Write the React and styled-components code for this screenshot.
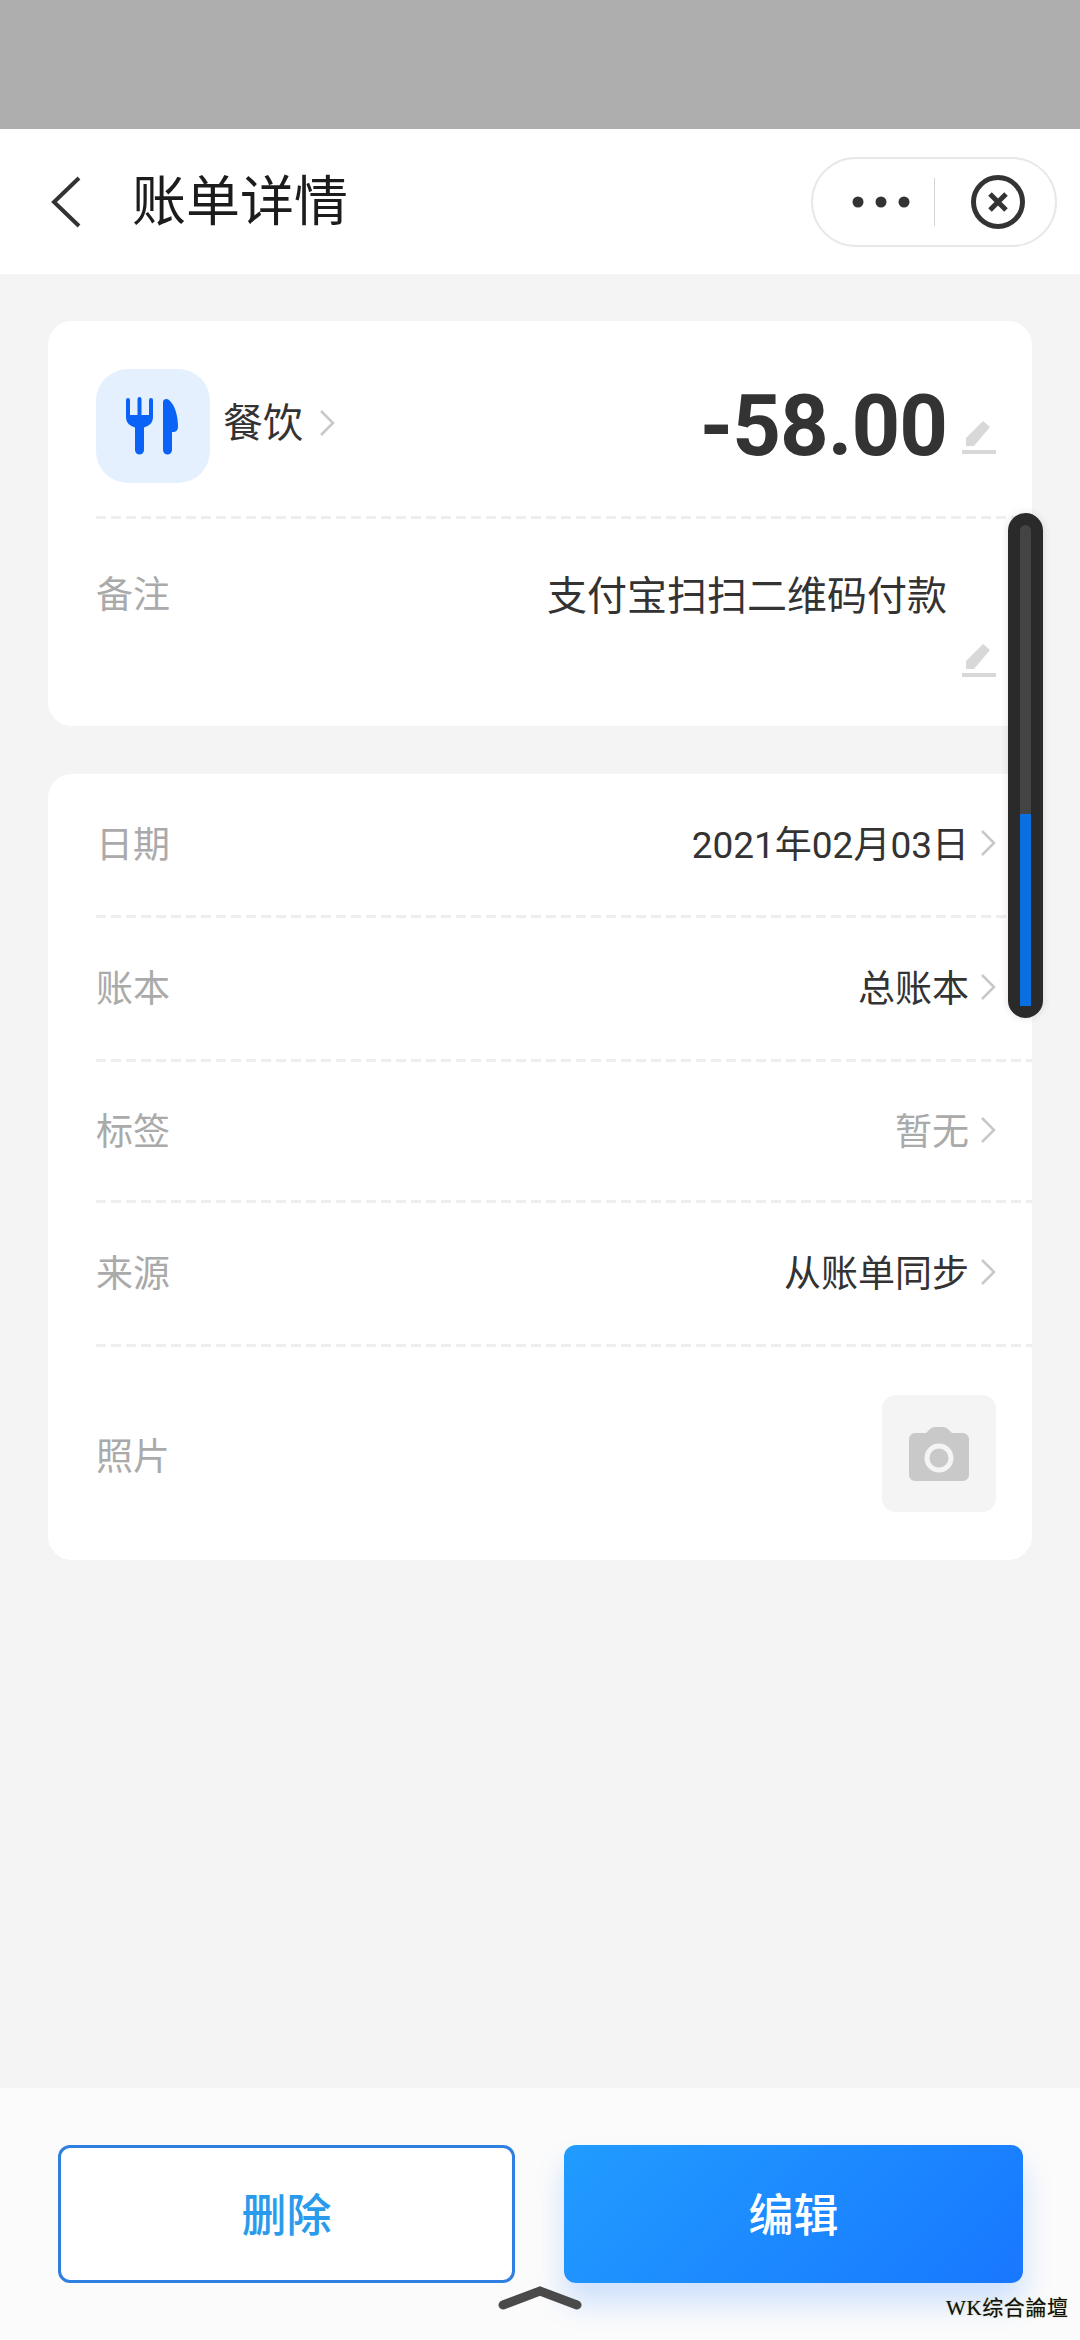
import styled, { createGlobalStyle } from 'styled-components';

const GlobalStyle = createGlobalStyle`
  html, body {
    margin: 0;
    padding: 0;
    background: #f4f4f4;
    font-family: 'Noto Sans CJK SC', 'Noto Sans', sans-serif;
  }
  * { box-sizing: border-box; }
`;

const rows = [
  { label: '日期', value: '2021年02月03日', height: 144 },
  { label: '账本', value: '总账本', height: 144 },
  { label: '标签', value: '暂无', height: 141, muted: true },
  { label: '来源', value: '从账单同步', height: 144 },
];

const scrollPercent = 40;

function Chevron({ className }) {
  return (
    <svg className={className} viewBox="0 0 16 28" fill="none">
      <path d="M2 2l12 12L2 26" stroke="#c8c8c8" strokeWidth="2.5" />
    </svg>
  );
}

function Pencil() {
  return (
    <PencilIcon viewBox="0 0 34 34" fill="#d8d8d8">
      <path d="M21 1l7 6-16 19H4v-8z" />
      <rect x="0" y="30" width="34" height="4" />
    </PencilIcon>
  );
}

function App() {
  return (
    <Page>
      <GlobalStyle />
      <StatusBar />

      <Header>
        <BackIcon viewBox="0 0 32 52" fill="none">
          <path d="M29 2L4 26l25 24" stroke="#333" strokeWidth="4" />
        </BackIcon>
        <Title>账单详情</Title>
        <Capsule>
          <DotsIcon viewBox="0 0 58 14" fill="#333">
            <circle cx="6" cy="7" r="5.5" />
            <circle cx="29" cy="7" r="5.5" />
            <circle cx="52" cy="7" r="5.5" />
          </DotsIcon>
          <CapsuleLine />
          <CloseIcon viewBox="0 0 54 54" fill="none" stroke="#333">
            <circle cx="27" cy="27" r="24.5" strokeWidth="5" />
            <path d="M19 19l16 16M35 19L19 35" strokeWidth="5" />
          </CloseIcon>
        </Capsule>
      </Header>

      <Main>
        <Card>
          <Summary>
            <CategoryBox>
              <svg width="114" height="114" viewBox="0 0 114 114" fill="#0a63f6">
                <path d="M30 31a2 2 0 0 1 4 0V46h7.5V30a2 2 0 0 1 4 0V46H53V31a2 2 0 0 1 4 0V48c0 6-4 9-9 10.5V81a4.5 4.5 0 0 1-9 0V58.5C34 57 30 54 30 48z" />
                <path d="M67 33c0-3 4-4 6-2 6 5 9 16 9 27 0 3-2 5-5 5h-1V81a4.5 4.5 0 0 1-9 0z" />
              </svg>
            </CategoryBox>
            <CategoryName>餐饮</CategoryName>
            <CategoryArrow />
            <Amount>-58.00</Amount>
            <Pencil />
          </Summary>
          <NoteRow>
            <Label>备注</Label>
            <NoteBody>
              <NoteText>支付宝扫扫二维码付款</NoteText>
              <Pencil />
            </NoteBody>
          </NoteRow>
        </Card>

        <DetailCard>
          {rows.map((row) => (
            <Row key={row.label} $height={row.height}>
              <Label>{row.label}</Label>
              <Value $muted={row.muted}>{row.value}</Value>
              <RowArrow />
            </Row>
          ))}
          <PhotoRow>
            <Label>照片</Label>
            <PhotoBox>
              <svg width="60" height="54" viewBox="0 0 60 54" fill="#c9c9c9">
                <path d="M6 6h11l3-3c2-2 4-3 6-3h8c2 0 4 1 6 3l3 3h11c3 0 6 3 6 6v36c0 3-3 6-6 6H6c-3 0-6-3-6-6V12c0-3 3-6 6-6z" />
                <circle cx="30" cy="31" r="12" fill="#c9c9c9" stroke="#f4f4f4" strokeWidth="5" />
              </svg>
            </PhotoBox>
          </PhotoRow>
        </DetailCard>
      </Main>

      <Footer>
        <DeleteButton>删除</DeleteButton>
        <EditButton>编辑</EditButton>
      </Footer>

      <ScrollTrack>
        <ScrollFill style={{ height: `${scrollPercent}%` }} />
      </ScrollTrack>
      <GestureIcon viewBox="0 0 84 24" fill="none">
        <path d="M5 19L42 5l37 14" stroke="#4a4a4a" strokeWidth="9" strokeLinecap="round" />
      </GestureIcon>
      <Watermark>WK综合論壇</Watermark>
    </Page>
  );
}

export default App;

const Page = styled.div`
  position: relative;
  display: flex;
  flex-direction: column;
  width: 1080px;
  height: 2340px;
  overflow: hidden;
  background: #f4f4f4;
`;

const StatusBar = styled.div`
  height: 129px;
  background: #aeaeae;
`;

const Header = styled.header`
  display: flex;
  align-items: center;
  height: 145px;
  padding: 0 23px 0 50px;
  background: #fff;
`;

const BackIcon = styled.svg`
  width: 32px;
  height: 52px;
`;

const Title = styled.h1`
  flex: 1;
  margin: -8px 0 0 50px;
  font-size: 54px;
  font-weight: 400;
  color: #1c1c1c;
`;

const Capsule = styled.div`
  display: flex;
  align-items: center;
  width: 246px;
  height: 90px;
  padding-left: 39px;
  border: 2px solid #e8e8e8;
  border-radius: 45px;
`;

const DotsIcon = styled.svg`
  width: 58px;
  height: 14px;
`;

const CapsuleLine = styled.div`
  width: 1px;
  height: 48px;
  margin: 0 36px 0 24px;
  background: #d4d4d4;
`;

const CloseIcon = styled.svg`
  width: 54px;
  height: 54px;
`;

const Main = styled.main`
  flex: 1;
  display: flex;
  flex-direction: column;
  gap: 48px;
  padding: 47px 48px 0;
`;

const Card = styled.section`
  height: 405px;
  background: #fff;
  border-radius: 24px;
`;

const DetailCard = styled(Card)`
  height: 786px;
`;

const Summary = styled.div`
  display: flex;
  align-items: center;
  height: 198px;
  margin-left: 48px;
  padding: 12px 36px 0 0;
  background: repeating-linear-gradient(90deg, #eee 0 10px, transparent 10px 15px) bottom / 100% 3px no-repeat;
`;

const CategoryBox = styled.div`
  width: 114px;
  height: 114px;
  border-radius: 32px;
  background: #e5f0ff;
`;

const CategoryName = styled.span`
  margin: -12px 0 0 13px;
  font-size: 40px;
  color: #333;
`;

const CategoryArrow = styled(Chevron)`
  width: 16px;
  height: 28px;
  margin: -6px 0 0 16px;
`;

const Amount = styled.span`
  margin-left: auto;
  font-family: Roboto, sans-serif;
  font-size: 85px;
  font-weight: 700;
  letter-spacing: -1px;
  color: #333;
`;

const PencilIcon = styled.svg`
  flex: none;
  width: 34px;
  height: 34px;
  margin: 22px 0 0 15px;
`;

const NoteRow = styled.div`
  display: flex;
  justify-content: space-between;
  margin-left: 48px;
  padding: 46px 36px 0 0;
`;

const Label = styled.span`
  font-size: 37px;
  line-height: 54px;
  color: #aaa;
`;

const NoteBody = styled.div`
  display: flex;
  flex-direction: column;
  align-items: flex-end;
`;

const NoteText = styled.span`
  margin-right: 49px;
  font-size: 40px;
  line-height: 56px;
  color: #333;
`;

const Row = styled.div`
  display: flex;
  align-items: center;
  height: ${(p) => p.$height}px;
  margin-left: 48px;
  padding: 0 36px 6px 0;
  background: repeating-linear-gradient(90deg, #eee 0 10px, transparent 10px 15px) bottom / 100% 3px no-repeat;

  & > span {
    margin-top: -2px;
  }
`;

const Value = styled.span`
  margin-left: auto;
  font-family: Roboto, 'Noto Sans CJK SC', sans-serif;
  font-size: 37px;
  color: ${(p) => (p.$muted ? '#aaa' : '#333')};
`;

const RowArrow = styled(Chevron)`
  width: 16px;
  height: 28px;
  margin-left: 11px;
`;

const PhotoRow = styled.div`
  display: flex;
  align-items: center;
  justify-content: space-between;
  height: 213px;
  margin-left: 48px;
  padding-right: 36px;
`;

const PhotoBox = styled.div`
  display: flex;
  align-items: center;
  justify-content: center;
  width: 114px;
  height: 117px;
  border-radius: 14px;
  background: #f4f4f4;
`;

const Footer = styled.footer`
  display: flex;
  gap: 49px;
  height: 252px;
  padding: 57px 57px 0 58px;
  background: #fbfbfb;
`;

const DeleteButton = styled.button`
  width: 457px;
  height: 138px;
  padding: 0 0 4px;
  border: 3px solid #2f7fe0;
  border-radius: 12px;
  background: #fff;
  font-family: inherit;
  font-size: 45px;
  font-weight: 500;
  color: #2a9bec;
`;

const EditButton = styled.button`
  width: 459px;
  height: 138px;
  padding: 0 0 4px;
  border: none;
  border-radius: 12px;
  background: linear-gradient(135deg, #219cff, #1877ff);
  box-shadow: 0 20px 30px rgba(24, 119, 255, 0.2);
  font-family: inherit;
  font-size: 45px;
  font-weight: 500;
  color: #fff;
`;

const ScrollTrack = styled.div`
  position: absolute;
  top: 513px;
  left: 1008px;
  display: flex;
  align-items: flex-end;
  width: 35px;
  height: 505px;
  border: 12px solid #2a2a2a;
  border-radius: 18px;
  background: #444;
  box-shadow: 0 0 8px rgba(0, 0, 0, 0.12);
`;

const ScrollFill = styled.div`
  width: 100%;
  background: #0a6fe0;
`;

const GestureIcon = styled.svg`
  position: absolute;
  top: 2286px;
  left: 498px;
  width: 84px;
  height: 24px;
`;

const Watermark = styled.div`
  position: absolute;
  top: 2295px;
  left: 946px;
  font-family: 'Liberation Serif', 'Noto Sans CJK TC', serif;
  font-size: 21px;
  line-height: 26px;
  letter-spacing: 0.6px;
  white-space: nowrap;
  color: #111;
  text-shadow: 0 0 1px #8a8a40;
`;
